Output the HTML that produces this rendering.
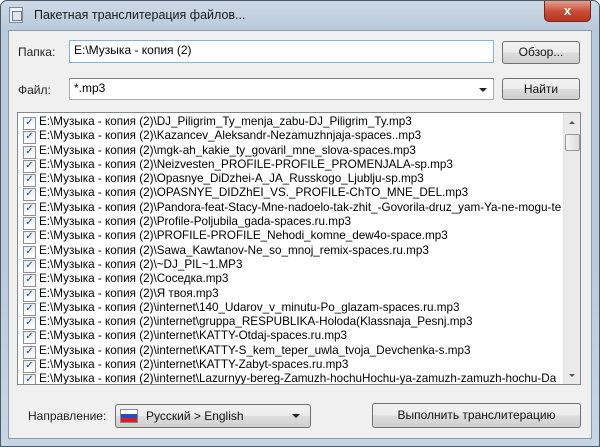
<!DOCTYPE html>
<html><head><meta charset="utf-8"><style>
*{box-sizing:border-box;margin:0;padding:0}
body{width:600px;height:447px;overflow:hidden;background:#fff;font-family:"Liberation Sans","DejaVu Sans",sans-serif;font-size:12px;color:#000;position:relative}
.win{position:absolute;left:0;top:0;width:600px;height:447px;border:1px solid #4a5a6a;border-radius:7px 7px 0 0;background:linear-gradient(#cdd9e6,#b9cadb 30px,#bccbdb 60%,#c8d6e4);}
.title{position:absolute;left:33px;top:7px;font-size:12.5px;color:#1a1a1a}
.ico{position:absolute;left:8px;top:6px;width:14px;height:16px;border:1px solid #7a8a9a;background:#eef2f6}
.ico:after{content:"";position:absolute;left:2px;top:3px;width:8px;height:8px;border:1px solid #6a7a8a;background:#dfe6ee}
.close{position:absolute;left:543px;top:0;width:47px;height:21px;border:1px solid #6a2a22;border-top:none;border-radius:0 0 5px 5px;background:linear-gradient(#e8a090,#c8503a 50%,#b8321c);color:#fff;font-weight:bold;text-align:center;font-size:13px;line-height:19px}
.client{position:absolute;left:8px;top:30px;width:584px;height:409px;background:#f0f0f0;border:1px solid #8a9aaa}
.lbl{position:absolute;color:#222}
.inp{position:absolute;background:#fff;border:1px solid #abadb3;border-top-color:#7a7f88;padding-left:4px;line-height:19px}
.btn{position:absolute;border:1px solid #707070;border-radius:3px;background:linear-gradient(#f2f2f2,#ebebeb 50%,#dddddd 51%,#cfcfcf);text-align:center;color:#111}
.arrow{position:absolute;width:0;height:0;border-left:4px solid transparent;border-right:4px solid transparent;border-top:4px solid #222}
.list{position:absolute;left:17px;top:112px;width:564px;height:273px;background:#fff;border:1px solid #828790;overflow:hidden;padding-top:2px}
.row{height:14.3px;line-height:14.3px;white-space:nowrap;padding-left:21px;position:relative;font-size:11.7px}
.row:before{content:"✓";position:absolute;left:5px;top:2px;width:11px;height:11px;border:1px solid #8f8f8f;background:linear-gradient(#e5ecf5,#fff);color:#2a4a8a;font-size:10px;line-height:10px;text-align:center;font-weight:bold}
.sb{position:absolute;right:0;top:0;width:17px;height:271px;background:#eaeaea;border-left:1px solid #e2e2e2}
.thumb{position:absolute;left:1px;top:21px;width:15px;height:17px;border:1px solid #9a9a9a;border-radius:2px;background:linear-gradient(90deg,#f4f4f4,#dcdcdc)}
</style></head><body>
<div class="win">
<div class="ico"></div>
<div class="title">Пакетная транслитерация файлов...</div>
<div class="close">x</div>
</div>
<div class="client"></div>
<div class="lbl" style="left:18px;top:45px">Папка:</div>
<div class="inp" style="left:69px;top:40px;width:425px;height:23px;border-color:#7eb4ea;">E:\Музыка - копия (2)</div>
<div class="btn" style="left:502px;top:41px;width:78px;height:23px;line-height:21px">Обзор...</div>
<div class="lbl" style="left:18px;top:83px">Файл:</div>
<div class="inp" style="left:69px;top:78px;width:425px;height:22px">*.mp3</div>
<div class="arrow" style="left:479px;top:88px"></div>
<div class="btn" style="left:502px;top:78px;width:78px;height:22px;line-height:20px">Найти</div>
<div class="list">
<div class="row">E:\Музыка - копия (2)\DJ_Piligrim_Ty_menja_zabu-DJ_Piligrim_Ty.mp3</div>
<div class="row">E:\Музыка - копия (2)\Kazancev_Aleksandr-Nezamuzhnjaja-spaces..mp3</div>
<div class="row">E:\Музыка - копия (2)\mgk-ah_kakie_ty_govaril_mne_slova-spaces.mp3</div>
<div class="row">E:\Музыка - копия (2)\Neizvesten_PROFILE-PROFILE_PROMENJALA-sp.mp3</div>
<div class="row">E:\Музыка - копия (2)\Opasnye_DiDzhei-A_JA_Russkogo_Ljublju-sp.mp3</div>
<div class="row">E:\Музыка - копия (2)\OPASNYE_DIDZhEI_VS._PROFILE-ChTO_MNE_DEL.mp3</div>
<div class="row">E:\Музыка - копия (2)\Pandora-feat-Stacy-Mne-nadoelo-tak-zhit_-Govorila-druz_yam-Ya-ne-mogu-te</div>
<div class="row">E:\Музыка - копия (2)\Profile-Poljubila_gada-spaces.ru.mp3</div>
<div class="row">E:\Музыка - копия (2)\PROFILE-PROFILE_Nehodi_komne_dew4o-space.mp3</div>
<div class="row">E:\Музыка - копия (2)\Sawa_Kawtanov-Ne_so_mnoj_remix-spaces.ru.mp3</div>
<div class="row">E:\Музыка - копия (2)\~DJ_PIL~1.MP3</div>
<div class="row">E:\Музыка - копия (2)\Соседка.mp3</div>
<div class="row">E:\Музыка - копия (2)\Я твоя.mp3</div>
<div class="row">E:\Музыка - копия (2)\internet\140_Udarov_v_minutu-Po_glazam-spaces.ru.mp3</div>
<div class="row">E:\Музыка - копия (2)\internet\gruppa_RESPUBLIKA-Holoda(Klassnaja_Pesnj.mp3</div>
<div class="row">E:\Музыка - копия (2)\internet\KATTY-Otdaj-spaces.ru.mp3</div>
<div class="row">E:\Музыка - копия (2)\internet\KATTY-S_kem_teper_uwla_tvoja_Devchenka-s.mp3</div>
<div class="row">E:\Музыка - копия (2)\internet\KATTY-Zabyt-spaces.ru.mp3</div>
<div class="row">E:\Музыка - копия (2)\internet\Lazurnyy-bereg-Zamuzh-hochuHochu-ya-zamuzh-zamuzh-hochu-Da</div>
<div class="sb"><div style="position:absolute;left:5px;top:8px;border-left:3px solid transparent;border-right:3px solid transparent;border-bottom:3px solid #555"></div><div class="thumb"></div><div style="position:absolute;left:5px;top:261px;border-left:3px solid transparent;border-right:3px solid transparent;border-top:3px solid #555"></div></div>
</div>
<div class="lbl" style="left:28px;top:409px">Направление:</div>
<div class="btn" style="left:115px;top:404px;width:196px;height:24px;text-align:left;line-height:22px;padding-left:30px">Русский &gt; English</div>
<div style="position:absolute;left:120px;top:409px;width:18px;height:14px;background:linear-gradient(#fff 33%,#2a4ac0 33%,#2a4ac0 66%,#d42020 66%);border:1px solid #888"></div>
<div class="arrow" style="left:292px;top:414px"></div>
<div class="btn" style="left:372px;top:403px;width:209px;height:25px;line-height:23px">Выполнить транслитерацию</div>
</body></html>
